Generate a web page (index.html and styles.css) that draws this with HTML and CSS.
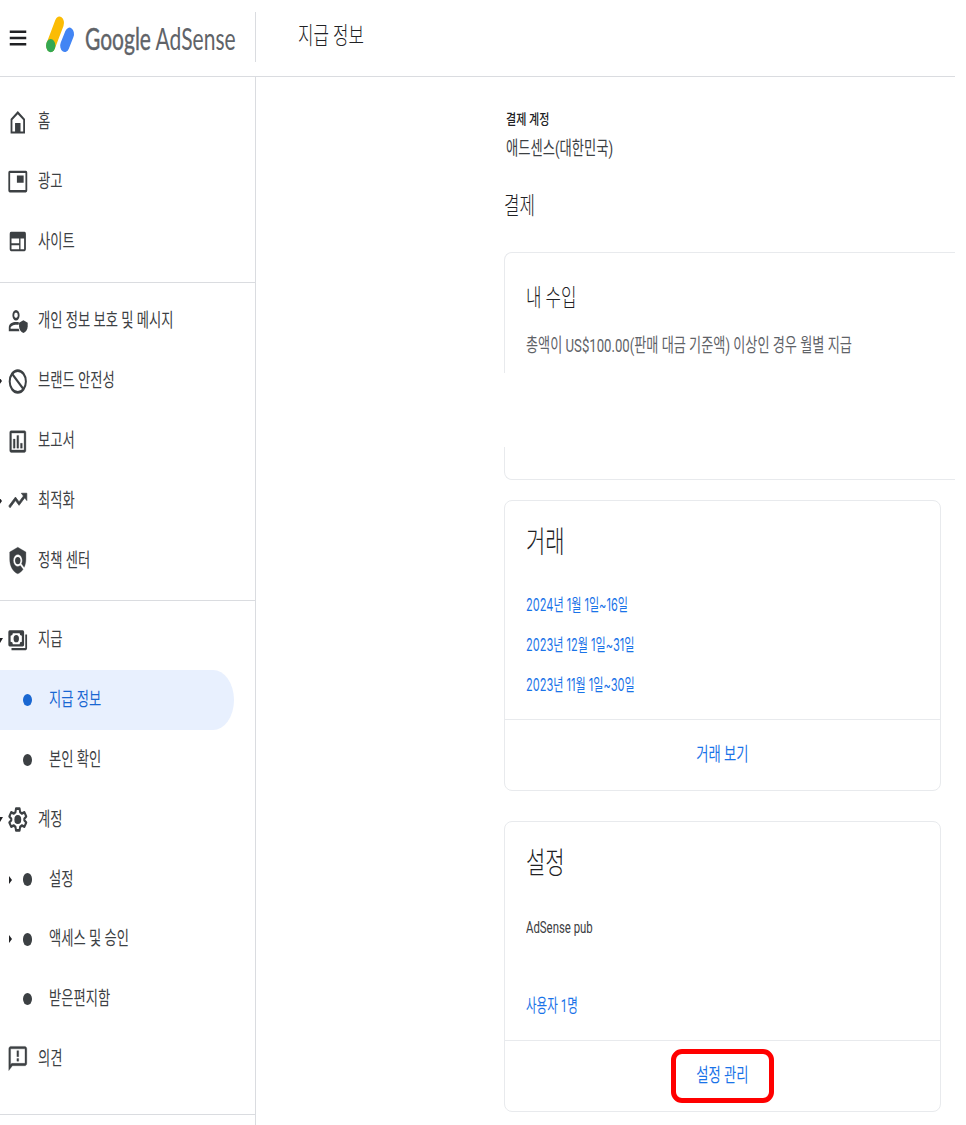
FILE: index.html
```html
<!DOCTYPE html>
<html lang="ko">
<head>
    <meta charset="UTF-8">
    <meta name="viewport" content="width=device-width, initial-scale=1.0">
    <title>Google AdSense - 지급 정보</title>
    <link rel="stylesheet" href="styles.css">
</head>
<body>
    <div class="page">
        <header class="header">
            <div class="brand">
                <svg class="menu-icon" viewBox="0 0 24 24" preserveAspectRatio="none"><path d="M3 6h18v2H3zM3 11h18v2H3zM3 16h18v2H3z"/></svg>
                <svg class="logo" viewBox="0 0 28 26" preserveAspectRatio="none">
                    <path d="M13.4 5L4.8 21.4" stroke="#fbbc04"/>
                    <path d="M23.4 13L18.8 21.4" stroke="#4285f4"/>
                    <circle cx="4.7" cy="21.4" r="4.7" fill="#34a853"/>
                </svg>
                <span class="wordmark"><span class="google">Google</span> AdSense</span>
            </div>
            <h1 class="page-title"><span class="narrow">지급 정보</span></h1>
        </header>

        <div class="layout">
            <nav class="sidebar">
                <a class="item">
                    <span class="arrow"></span>
                    <svg class="icon" viewBox="0 0 24 24" preserveAspectRatio="none"><path fill-rule="evenodd" d="M4 21V9l8-6.5L20 9v12H4zm2-1.500h3v-7h6v7h3V10l-6-4.900L6 10z"/><path d="M9.500 13h5v7h-5z"/></svg>
                    <span class="label">홈</span>
                </a>
                <a class="item">
                    <span class="arrow"></span>
                    <svg class="icon" viewBox="0 0 24 24" preserveAspectRatio="none"><path fill-rule="evenodd" d="M3 3h18q1.500 0 1.500 1.500v15q0 1.500-1.500 1.500H3q-1.500 0-1.500-1.500v-15Q1.500 3 3 3zm.5 2v14h17V5zM11 7h7.500v6H11z"/></svg>
                    <span class="label">광고</span>
                </a>
                <a class="item">
                    <span class="arrow"></span>
                    <svg class="icon" viewBox="0 0 24 24" preserveAspectRatio="none"><path fill-rule="evenodd" d="M4.500 4h15Q21 4 21 5.500v13q0 1.500-1.500 1.500h-15Q3 20 3 18.500v-13Q3 4 4.500 4zM5 9.500v4h8.500v-4zM5 15v3.400h8.500V15zM15 9.500v8.900h4V9.500z"/></svg>
                    <span class="label">사이트</span>
                </a>
                <hr class="divider">
                <a class="item">
                    <span class="arrow"></span>
                    <svg class="icon" viewBox="0 0 24 24" preserveAspectRatio="none"><path fill-rule="evenodd" d="M10 2.500a4 4.300 0 1 1 0 8.600a4 4.300 0 0 1 0-8.600zm0 2a2 2.300 0 1 0 0 4.600a2 2.300 0 0 0 0-4.600zM2 20v-3c0-3 4-4.500 8-4.500 1.500 0 2.500.1 3.500.4l-.8 1.900c-4-.7-8.700.7-8.700 2.400V18h9l.8 2z"/><path d="M18.200 11l4.800 2v3c0 2.700-2 4.900-4.800 5.500-2.800-.6-4.800-2.800-4.800-5.500v-3z"/></svg>
                    <span class="label">개인 정보 보호 및 메시지</span>
                </a>
                <a class="item">
                    <span class="arrow"><svg class="right" viewBox="0 0 3 8"><path d="M0 0l3 4-3 4z"/></svg></span>
                    <svg class="icon" viewBox="0 0 24 24" preserveAspectRatio="none"><g fill="none" stroke="#3c4043" stroke-width="2.200"><circle cx="12" cy="12" r="9"/><path d="M5.500 5.500l13 13"/></g></svg>
                    <span class="label">브랜드 안전성</span>
                </a>
                <a class="item">
                    <span class="arrow"></span>
                    <svg class="icon" viewBox="0 0 24 24" preserveAspectRatio="none"><path fill-rule="evenodd" d="M4.500 3h15Q21 3 21 4.500v15q0 1.500-1.500 1.500h-15Q3 21 3 19.500v-15Q3 3 4.500 3zM5 5v14h14V5zM7 10h2v7.500H7zM11 7h2v10.500h-2zM15 13.500h2v4h-2z" stroke="#3c4043" stroke-width=".3"/></svg>
                    <span class="label">보고서</span>
                </a>
                <a class="item">
                    <span class="arrow"><svg class="right" viewBox="0 0 3 8"><path d="M0 0l3 4-3 4z"/></svg></span>
                    <svg class="icon" viewBox="0 0 24 24" preserveAspectRatio="none"><path d="M16 6l2.290 2.290-4.880 4.880-4-4L2 16.590 3.410 18l6-6 4 4 6.300-6.290L22 12V6z" stroke="#3c4043" stroke-width=".7"/></svg>
                    <span class="label">최적화</span>
                </a>
                <a class="item">
                    <span class="arrow"></span>
                    <svg class="icon" viewBox="0 0 24 24" preserveAspectRatio="none"><path d="M21 5l-9-4-9 4v6c0 5.550 3.840 10.740 9 12 2.300-.56 4.330-1.900 5.880-3.710l-3.120-3.120c-1.940 1.290-4.580 1.070-6.290-.64-1.950-1.950-1.950-5.120 0-7.070 1.950-1.950 5.120-1.950 7.070 0 1.710 1.710 1.920 4.350.64 6.290l2.900 2.900C20.290 15.690 21 13.380 21 11V5z" stroke="#3c4043" stroke-width=".3"/><circle cx="12" cy="12" r="3"/></svg>
                    <span class="label">정책 센터</span>
                </a>
                <hr class="divider">
                <a class="item">
                    <span class="arrow"><svg class="down" viewBox="0 0 6 5" preserveAspectRatio="none"><path d="M0 0h6L3 5z"/></svg></span>
                    <svg class="icon" viewBox="0 0 24 24" preserveAspectRatio="none"><path fill-rule="evenodd" d="M3 3.500h14.500Q19 3.500 19 5v10.500q0 1.500-1.500 1.500H3Q1.500 17 1.500 15.500V5Q1.500 3.500 3 3.500zM6.500 6Q6.500 8 4 8v5q2.500 0 2.500 2h7.500q0-2 2.500-2V8Q14 8 14 6zM10.300 7.500a3 3 0 1 1 0 6a3 3 0 0 1 0-6z"/><path d="M20.300 7H22.300v11.500q0 1.500-1.500 1.500H5v-1.700h15.300z"/></svg>
                    <span class="label">지급</span>
                </a>
                <a class="item sub active">
                    <span class="arrow"></span>
                    <span class="dot"></span>
                    <span class="label">지급 정보</span>
                </a>
                <a class="item sub">
                    <span class="arrow"></span>
                    <span class="dot"></span>
                    <span class="label">본인 확인</span>
                </a>
                <a class="item">
                    <span class="arrow"><svg class="down" viewBox="0 0 6 5" preserveAspectRatio="none"><path d="M0 0h6L3 5z"/></svg></span>
                    <svg class="icon" viewBox="0 0 24 24" preserveAspectRatio="none"><path d="M10 3h4l.6 2.900 2 1.150 2.800-1 2 3.450-2.200 1.900v1.200l2.200 1.900-2 3.450-2.800-1-2 1.150L14 21h-4l-.6-2.900-2-1.150-2.800 1-2-3.450 2.200-1.900v-1.200L2.600 9.500l2-3.450 2.800 1 2-1.150z" fill="none" stroke="#3c4043" stroke-width="2.200" stroke-linejoin="round"/><circle cx="12" cy="12" r="3.800"/></svg>
                    <span class="label">계정</span>
                </a>
                <a class="item sub">
                    <span class="arrow"><svg class="right" viewBox="0 0 3 8"><path d="M0 0l3 4-3 4z"/></svg></span>
                    <span class="dot"></span>
                    <span class="label">설정</span>
                </a>
                <a class="item sub">
                    <span class="arrow"><svg class="right" viewBox="0 0 3 8"><path d="M0 0l3 4-3 4z"/></svg></span>
                    <span class="dot"></span>
                    <span class="label">액세스 및 승인</span>
                </a>
                <a class="item sub">
                    <span class="arrow"></span>
                    <span class="dot"></span>
                    <span class="label">받은편지함</span>
                </a>
                <a class="item">
                    <span class="arrow"></span>
                    <svg class="icon" viewBox="0 0 24 24" preserveAspectRatio="none"><path d="M20 2H4c-1.100 0-2 .9-2 2v18l4-4h14c1.100 0 2-.9 2-2V4c0-1.100-.9-2-2-2zm0 14H5.200L4 17.200V4h16v12zM11 12h2v2.200h-2zM11 5.500h2v5h-2z" stroke="#3c4043" stroke-width=".3"/></svg>
                    <span class="label">의견</span>
                </a>
                <hr class="divider last">
            </nav>

            <main class="content">
                <p class="account-label"><span class="narrow">결제 계정</span></p>
                <p class="account-name"><span class="narrow">애드센스(대한민국)</span></p>
                <h2 class="section-title"><span class="narrow">결제</span></h2>

                <section class="earnings">
                    <div class="earnings-top">
                        <h3 class="earnings-title"><span class="narrow">내 수입</span></h3>
                        <p class="earnings-text"><span class="narrow">총액이 US$100.00(판매 대금 기준액) 이상인 경우 월별 지급</span></p>
                    </div>
                    <div class="earnings-bottom"></div>
                </section>

                <section class="card">
                    <div class="card-body">
                        <h3 class="card-title"><span class="narrow">거래</span></h3>
                        <ul class="dates">
                            <li><a class="narrow">2024년 1월 1일~16일</a></li>
                            <li><a class="narrow">2023년 12월 1일~31일</a></li>
                            <li><a class="narrow">2023년 11월 1일~30일</a></li>
                        </ul>
                    </div>
                    <div class="card-footer"><a class="action"><span>거래 보기</span></a></div>
                </section>

                <section class="card">
                    <div class="card-body">
                        <h3 class="card-title"><span class="narrow">설정</span></h3>
                        <p class="product"><span class="narrow">AdSense pub</span></p>
                        <p class="users"><a class="narrow">사용자 1명</a></p>
                    </div>
                    <div class="card-footer"><a class="action highlight"><span>설정 관리</span></a></div>
                </section>
            </main>
        </div>
    </div>
</body>
</html>
```
FILE: styles.css
```css
* {
    box-sizing: border-box;
}

body {
    margin: 0;
    height: 1125px;
    overflow: hidden;
    background-color: #fff;
    font-family: Roboto, "Noto Sans CJK KR", sans-serif;
    color: #3c4043;
}

h1, h2, h3, p, ul {
    margin: 0;
    padding: 0;
    font-weight: 400;
    list-style: none;
}

h1, h2, h3 {
    font-weight: 300;
    color: #202124;
}

svg {
    display: block;
    flex: none;
}

.page {
    width: 955px;
    height: 1125px;
    display: flex;
    flex-direction: column;
}

/* condensed text */
.narrow, .label, .wordmark {
    display: inline-block;
    white-space: nowrap;
    transform: scaleX(0.7);
    transform-origin: left center;
}

/* header */
.header {
    display: flex;
    height: 77px;
    flex: none;
    border-bottom: 1px solid #dadce0;
}

.brand {
    display: flex;
    width: 256px;
    height: 50px;
    margin-top: 12px;
    padding-left: 7px;
    border-right: 1px solid #dadce0;
}

.menu-icon {
    width: 22px;
    height: 30px;
    margin-top: 10.5px;
    fill: #202124;
}

.logo {
    width: 28px;
    height: 36px;
    margin: 4px 11px 0 17px;
    fill: none;
    stroke-width: 9.2;
    stroke-linecap: round;
    overflow: visible;
}

.wordmark {
    width: 160px;
    font-family: Lato, sans-serif;
    font-size: 30px;
    line-height: 52px;
    color: #5f6368;
}

.google {
    -webkit-text-stroke: 0.4px #5f6368;
}

.page-title {
    padding-left: 42px;
    font-size: 24px;
    line-height: 72px;
}

/* sidebar */
.layout {
    display: flex;
    flex: 1;
}

.sidebar {
    width: 256px;
    flex: none;
    padding-top: 15.3px;
    border-right: 1px solid #dadce0;
}

.item {
    display: flex;
    align-items: center;
    height: 59.8px;
    font-size: 19px;
}

.arrow {
    width: 6.7px;
    flex: none;
}

.right {
    width: 3px;
    height: 8px;
    fill: #202124;
}

.item > .arrow .right {
    margin-left: -1px;
}

.down {
    width: 6px;
    height: 5px;
    margin-left: -3px;
    fill: #202124;
}

.icon {
    width: 21.6px;
    height: 29px;
    fill: #3c4043;
}

.label {
    margin-left: 10px;
    padding-bottom: 5px;
}

.sub {
    padding-left: 9px;
}

.item.sub > .arrow .right {
    margin-left: 0;
}

.sub .arrow {
    width: 14px;
}

.dot {
    width: 9.4px;
    height: 12.5px;
    flex: none;
    border-radius: 50%;
    background-color: #3c4043;
}

.sub .label {
    margin-left: 16.5px;
}

.active {
    width: 234px;
    color: #1967d2;
    background-color: #e8f0fe;
    border-radius: 0 21px 21px 0 / 0 30px 30px 0;
}

.active .dot {
    background-color: #1967d2;
}

.divider {
    height: 1px;
    margin: 9.9px 0 9px;
    border: none;
    background-color: #dadce0;
}

.divider.last {
    margin-top: 25px;
}

/* content */
.content {
    flex: 1;
    min-width: 0;
    padding: 32px 0 0 248px;
}

.account-label {
    padding-left: 2px;
    font-size: 14px;
    font-weight: 500;
    line-height: 20px;
    color: #202124;
}

.account-label .narrow {
    transform: scaleX(0.79);
}

.account-name {
    margin-top: 8px;
    padding-left: 2px;
    font-size: 19px;
    line-height: 24px;
}

.section-title {
    margin: 29px 0 30px;
    font-size: 24px;
    line-height: 32px;
}

/* the middle of this card is left blank */
.earnings {
    display: flex;
    flex-direction: column;
    justify-content: space-between;
    height: 228px;
    margin-bottom: 20px;
}

.earnings-top {
    height: 121px;
    padding: 29px 0 0 21px;
    border: solid #e8eaed;
    border-width: 1px 0 0 1px;
    border-top-left-radius: 8px;
}

.earnings-title {
    font-size: 24px;
    line-height: 32px;
}

.earnings-text {
    margin-top: 19px;
    font-size: 19px;
    line-height: 26px;
    color: #5f6368;
}

.earnings-text .narrow {
    transform: scaleX(0.692);
}

.earnings-bottom {
    height: 33px;
    border: solid #e8eaed;
    border-width: 0 0 1px 1px;
    border-bottom-left-radius: 8px;
}

.card {
    display: flex;
    flex-direction: column;
    width: 437px;
    height: 291px;
    margin-bottom: 30px;
    border: 1px solid #e8eaed;
    border-radius: 8px;
}

.card-body {
    flex: 1;
    padding: 19px 0 0 21px;
}

.card-title {
    font-size: 30px;
    line-height: 44px;
}

.dates {
    margin-top: 20.5px;
    font-family: Inter, "Noto Sans CJK KR", sans-serif;
    font-size: 17px;
    line-height: 40px;
    color: #1a73e8;
}

.dates .narrow {
    transform: scaleX(0.65);
}

.product {
    margin-top: 31.500px;
    font-size: 17px;
    line-height: 20px;
}

.product .narrow {
    transform: scaleX(0.67);
}

.users {
    margin-top: 57.500px;
    font-size: 18px;
    line-height: 24px;
    color: #1a73e8;
}

.users .narrow {
    transform: scaleX(0.64);
}

.card-footer {
    display: flex;
    justify-content: center;
    align-items: center;
    height: 71px;
    border-top: 1px solid #e8eaed;
}

.action {
    display: flex;
    justify-content: center;
    align-items: center;
    width: 103px;
    height: 54px;
    padding-bottom: 5px;
    font-size: 19px;
    color: #1a73e8;
    white-space: nowrap;
}

.action span {
    transform: scaleX(0.7);
}

.highlight {
    border: 5px solid #f00;
    border-radius: 11px;
}
```
